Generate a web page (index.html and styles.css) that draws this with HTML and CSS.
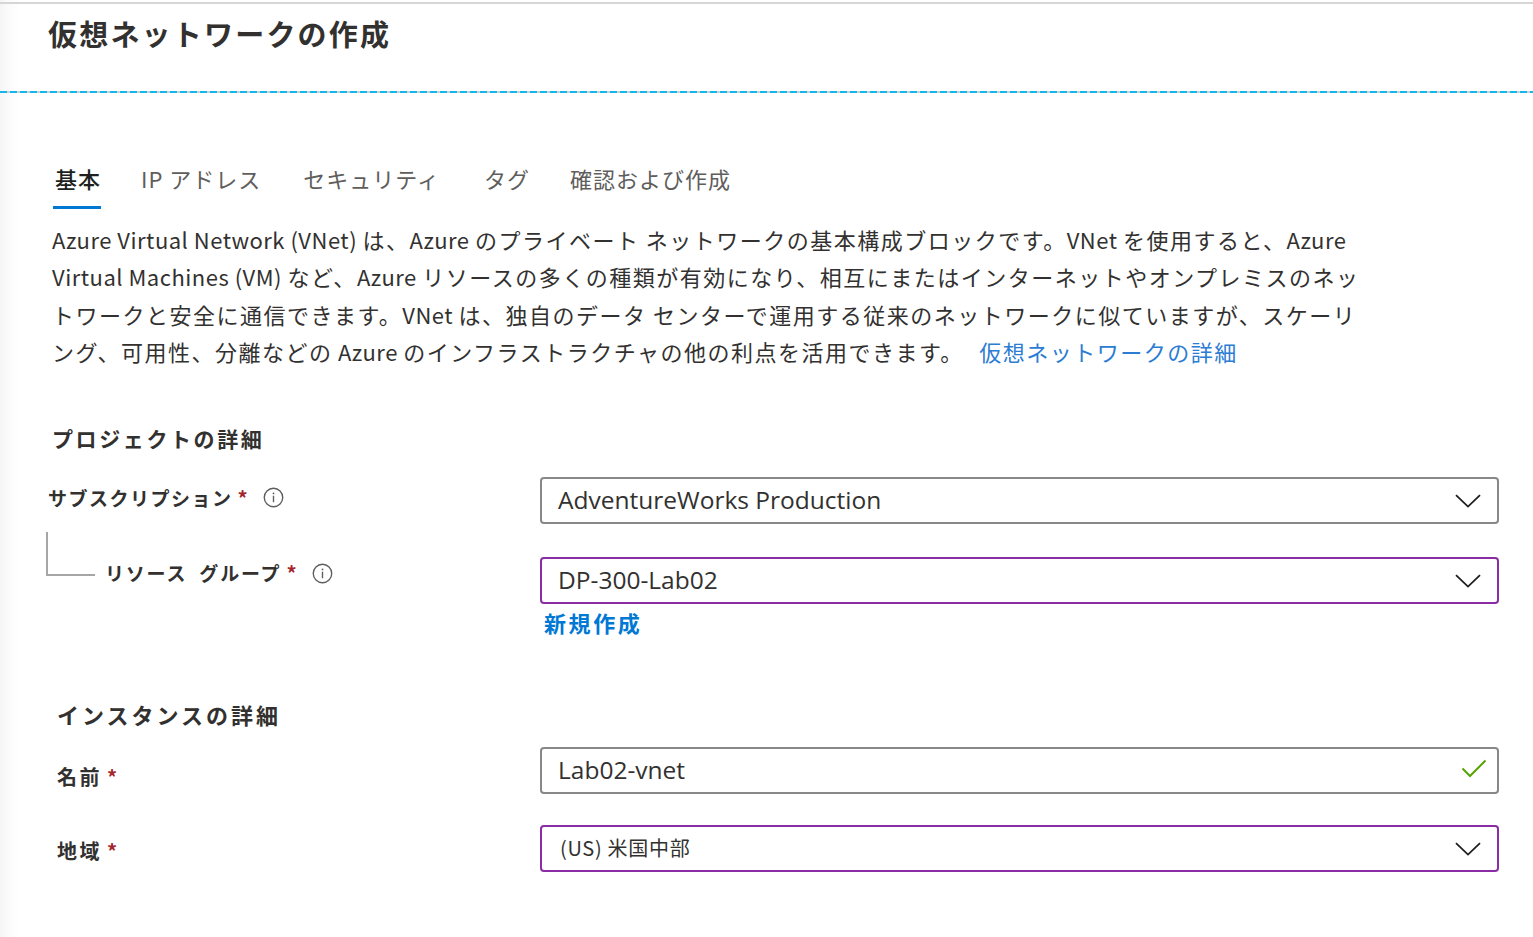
FILE: index.html
```html
<!DOCTYPE html>
<html lang="ja">
<head>
<meta charset="utf-8">
<title>仮想ネットワークの作成</title>
<link rel="stylesheet" href="styles.css">
</head>
<body>
<div class="page">
  <div class="topline"></div>
  <header class="hdr">
    <h1 class="title">仮想ネットワークの作成</h1>
  </header>
  <div class="dash"></div>

  <main class="content">
    <nav class="tabs">
      <a class="tab tab-active">基本</a>
      <a class="tab tab-ip">IP アドレス</a>
      <a class="tab tab-sec">セキュリティ</a>
      <a class="tab tab-tag">タグ</a>
      <a class="tab">確認および作成</a>
    </nav>

    <p class="intro"><span class="en">Azure Virtual Network (VNet) </span>は、<span class="en">Azure </span>のプライベート ネットワークの基本構成ブロックです。<span class="en">VNet </span>を使用すると、<span class="en">Azure</span><br><span class="en">Virtual Machines (VM) </span>など、<span class="en">Azure </span>リソースの多くの種類が有効になり、相互にまたはインターネットやオンプレミスのネッ<br>トワークと安全に通信できます。<span class="en">VNet </span>は、独自のデータ センターで運用する従来のネットワークに似ていますが、スケーリ<br>ング、可用性、分離などの<span class="en"> Azure </span>のインフラストラクチャの他の利点を活用できます。 <a class="link">仮想ネットワークの詳細</a></p>

    <h2 class="sec sec-project">プロジェクトの詳細</h2>

    <div class="row row-sub">
      <div class="label label-sub">
        <span class="ltext">サブスクリプション</span><span class="req">*</span>
        <svg class="info" viewBox="0 0 20 20" width="21" height="21"><circle cx="10" cy="10" r="8.8" fill="none" stroke="#605e5c" stroke-width="1.3"/><rect x="9.35" y="8.3" width="1.3" height="6.2" fill="#605e5c"/><circle cx="10" cy="6.1" r="0.85" fill="#605e5c"/></svg>
      </div>
      <div class="control">
        <div class="field">
          <span class="value">AdventureWorks Production</span>
          <svg class="chev" viewBox="0 0 26 14" width="26" height="14"><path d="M1 1.2 L13 12.6 L25 1.2" fill="none" stroke="#201f1e" stroke-width="1.8"/></svg>
        </div>
      </div>
    </div>

    <div class="row row-rg">
      <div class="label label-rg">
        <span class="tree"></span>
        <span class="ltext ltext-rg">リソース グループ</span><span class="req">*</span>
        <svg class="info" viewBox="0 0 20 20" width="21" height="21"><circle cx="10" cy="10" r="8.8" fill="none" stroke="#605e5c" stroke-width="1.3"/><rect x="9.35" y="8.3" width="1.3" height="6.2" fill="#605e5c"/><circle cx="10" cy="6.1" r="0.85" fill="#605e5c"/></svg>
      </div>
      <div class="control">
        <div class="field field-focus">
          <span class="value">DP-300-Lab02</span>
          <svg class="chev" viewBox="0 0 26 14" width="26" height="14"><path d="M1 1.2 L13 12.6 L25 1.2" fill="none" stroke="#201f1e" stroke-width="1.8"/></svg>
        </div>
        <a class="newlink">新規作成</a>
      </div>
    </div>

    <h2 class="sec sec-instance">インスタンスの詳細</h2>

    <div class="row row-name">
      <div class="label label-name">
        <span class="ltext ltext-big">名前</span><span class="req">*</span>
      </div>
      <div class="control">
        <div class="field">
          <span class="value">Lab02-vnet</span>
          <svg class="check" viewBox="0 0 26 20" width="26" height="20"><path d="M1.5 9.5 L9 17 L24.5 1.5" fill="none" stroke="#57a300" stroke-width="2"/></svg>
        </div>
      </div>
    </div>

    <div class="row row-region">
      <div class="label label-region">
        <span class="ltext ltext-big">地域</span><span class="req">*</span>
      </div>
      <div class="control">
        <div class="field field-focus">
          <span class="value value-small">(US) 米国中部</span>
          <svg class="chev" viewBox="0 0 26 14" width="26" height="14"><path d="M1 1.2 L13 12.6 L25 1.2" fill="none" stroke="#201f1e" stroke-width="1.8"/></svg>
        </div>
      </div>
    </div>
  </main>
</div>
</body>
</html>
```

FILE: styles.css
```css
html, body {
  margin: 0;
  padding: 0;
}

body {
  background: #ffffff;
  font-family: "Noto Sans CJK JP", "Noto Sans", sans-serif;
  color: #323130;
}

.page {
  min-height: 937px;
  background: linear-gradient(to right, #f5f5f5 0px, #fafafa 7px, #fdfdfd 14px, #ffffff 20px);
  overflow: hidden;
}

.topline {
  margin-top: 2px;
  height: 2px;
  background: #d6d6d6;
}

.hdr {
  height: 87px;
  padding-left: 48px;
}

.title {
  margin: 0;
  padding-top: 12px;
  font-size: 29px;
  line-height: 34px;
  font-weight: 700;
  letter-spacing: 2.2px;
  color: #323130;
}

.dash {
  height: 2px;
  background: repeating-linear-gradient(to right, #14b7ec 0px, #14b7ec 7px, #d0d0d0 7px, #d0d0d0 10px);
}

.content {
  padding-left: 48px;
}

/* Tabs */
.tabs {
  display: flex;
  margin-top: 70px;
  padding-left: 5px;
}

.tab {
  display: block;
  font-size: 22px;
  line-height: 30px;
  letter-spacing: 1px;
  color: #605e5c;
  padding: 0 0 13px 2px;
  border-bottom: 3px solid transparent;
  margin-right: 38px;
  white-space: nowrap;
}

.tab-active {
  color: #201f1e;
  border-bottom-color: #0078d4;
  font-weight: 500;
}

.tab-ip {
  margin-right: 40px;
}

.tab-sec {
  margin-right: 42px;
}

.tab-tag {
  margin-right: 38px;
}

/* Intro paragraph */
.intro {
  margin: 12px 0 0 4px;
  font-size: 22px;
  line-height: 37.4px;
  letter-spacing: 1.5px;
  white-space: nowrap;
  color: #323130;
}

.en {
  letter-spacing: 0.5px;
}

.link {
  color: #2b7cd3;
  margin-left: 9px;
}

/* Section headings */
.sec {
  margin: 0;
  font-size: 21px;
  line-height: 30px;
  font-weight: 700;
  letter-spacing: 2.6px;
  color: #323130;
}

.sec-project {
  margin-top: 52px;
  padding-left: 4px;
}

.sec-instance {
  margin-top: 62px;
  padding-left: 9px;
  font-size: 22px;
  letter-spacing: 3px;
}

/* Form rows */
.row {
  display: grid;
  grid-template-columns: 492px 959px;
}

.row-sub {
  margin-top: 24px;
}

.row-rg {
  margin-top: 33px;
}

.row-name {
  margin-top: 18px;
}

.row-region {
  margin-top: 31px;
}

.label {
  display: flex;
  align-items: center;
  align-self: start;
  height: 28px;
}

.label-sub {
  margin-top: 7px;
}

.label-rg {
  margin-top: 2px;
  margin-left: -2px;
  height: auto;
  align-items: flex-start;
}

.label-name {
  margin-top: 16px;
  padding-left: 9px;
}

.label-region {
  margin-top: 12px;
  padding-left: 9px;
}

.ltext {
  font-size: 19px;
  font-weight: 700;
  letter-spacing: 1.5px;
  line-height: 28px;
  color: #323130;
  white-space: nowrap;
}

.ltext-rg {
  letter-spacing: 1.8px;
  word-spacing: 6px;
}

.ltext-big {
  font-size: 20px;
  letter-spacing: 2.5px;
}

.label-rg .info {
  margin-top: 4px;
}

.req {
  color: #a4262c;
  font-size: 20px;
  font-weight: 700;
  line-height: 28px;
  margin-left: 5px;
}

.info {
  margin-left: 15px;
  flex: none;
}

.tree {
  display: block;
  flex: none;
  width: 49px;
  height: 44px;
  margin-top: -27px;
  margin-right: 10px;
  border-left: 2px solid #a8a6a4;
  border-bottom: 2px solid #a8a6a4;
  box-sizing: border-box;
}

/* Controls */
.control {
  display: flex;
  flex-direction: column;
}

.field {
  display: flex;
  align-items: center;
  justify-content: space-between;
  box-sizing: border-box;
  height: 47px;
  border: 2px solid #8a8886;
  border-radius: 4px;
  background: #ffffff;
  padding: 0 16px 0 16px;
}

.field-focus {
  border-color: #8a2da5;
}

.value {
  font-family: "Open Sans", "Noto Sans CJK JP", sans-serif;
  font-size: 24.5px;
  line-height: 30px;
  color: #323130;
  white-space: nowrap;
}

.value-small {
  font-family: "Noto Sans CJK JP", "Open Sans", sans-serif;
  font-size: 20px;
  letter-spacing: 0.7px;
  margin-left: 2px;
}

.chev {
  flex: none;
  margin-top: 1px;
}

.check {
  flex: none;
  margin-right: -6px;
  margin-top: -2px;
}

.newlink {
  display: block;
  margin-top: 3px;
  padding-left: 4px;
  font-size: 22px;
  line-height: 30px;
  font-weight: 700;
  letter-spacing: 2.6px;
  color: #0078d4;
}
```
